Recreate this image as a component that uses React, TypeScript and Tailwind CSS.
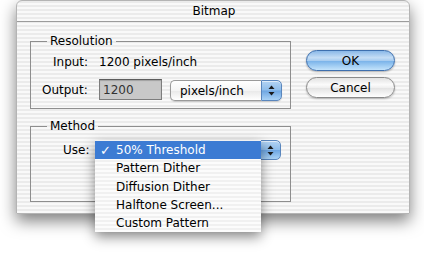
import React from "react";

const stripes =
  "bg-[repeating-linear-gradient(180deg,#ebebeb_0px,#ebebeb_2px,#f9f9f9_2px,#f9f9f9_4px)]";

function Arrows() {
  return (
    <svg width="7" height="11" viewBox="0 0 7 11">
      <path d="M3.5 0.5 L6.5 4 L0.5 4 Z" fill="#1a1a1a" />
      <path d="M3.5 10.5 L6.5 7 L0.5 7 Z" fill="#1a1a1a" />
    </svg>
  );
}

function ArrowPart({ h }: { h: string }) {
  return (
    <div
      className={`w-[21px] ${h} rounded-r-[5px] border border-[#5a86bd] bg-[linear-gradient(180deg,#b3d3f3_0%,#8fbdea_48%,#6ea6e2_52%,#a9d2f6_100%)] flex items-center justify-center shadow-[inset_0_1px_0_rgba(255,255,255,0.6)]`}
    >
      <Arrows />
    </div>
  );
}

export default function App() {
  return (
    <div
      className="relative w-[424px] h-[269px] bg-white overflow-hidden text-black"
      style={{ fontFamily: '"DejaVu Sans", "Noto Sans", sans-serif' }}
    >
      <div
        className={`ml-[16px] w-[394px] h-[214px] rounded-t-[6px] border border-[#b4b4b4] ${stripes} shadow-[0_7px_16px_rgba(0,0,0,0.5)] flex flex-col`}
      >
        <div className="h-[21px] border-b border-[#9c9c9c] flex items-center justify-center text-[12px] leading-none pl-[2px]">
          Bitmap
        </div>
        <div className="flex pl-[13px] pt-[11px]">
          {/* left column */}
          <div className="w-[261px] flex flex-col">
            <fieldset className="h-[76px] border border-[#8e8e8e] p-0 m-0 min-w-0">
              <legend className="ml-[16px] px-[3px] text-[12px] leading-[16px]">
                Resolution
              </legend>
              <div className="flex mt-[5px] pl-[22px] h-[16px] items-center text-[12px] leading-[16px]">
                <span className="w-[46px]">Input:</span>
                <span>1200 pixels/inch</span>
              </div>
              <div className="flex mt-[8px] pl-[11px] items-center text-[12px]">
                <span className="w-[57px]">Output:</span>
                <div className="w-[63px] h-[21px] border border-[#7d7d7d] border-t-[#5d5d5d] bg-[#c8c8c8] flex items-center pl-[3px] text-[#333] shadow-[inset_0_1px_1px_rgba(0,0,0,0.2)]">
                  1200
                </div>
                <div className="ml-[8px] mt-[2px] flex h-[21px] rounded-[5px] shadow-[0_1px_1px_rgba(0,0,0,0.15)]">
                  <div className="w-[91px] h-[21px] rounded-l-[5px] border border-r-0 border-[#9a9a9a] bg-[linear-gradient(180deg,#ffffff_0%,#f4f4f4_50%,#e9e9e9_52%,#ffffff_100%)] flex items-center pl-[9px]">
                    pixels/inch
                  </div>
                  <ArrowPart h="h-[21px]" />
                </div>
              </div>
            </fieldset>
            <fieldset className="mt-[9px] h-[84px] border border-[#8e8e8e] p-0 m-0 min-w-0">
              <legend className="ml-[16px] px-[3px] text-[12px] leading-[16px]">
                Method
              </legend>
              <div className="flex mt-[6px] pl-[32px] items-center text-[12px]">
                <span className="w-[32px]">Use:</span>
                <div className="relative flex h-[20px]">
                  <div className="w-[165px] h-[20px] rounded-l-[5px] border border-r-0 border-[#9a9a9a] bg-white" />
                  <ArrowPart h="h-[20px]" />
                  {/* open menu */}
                  <div
                    className={`absolute left-0 top-0 w-[166px] h-[92px] ${stripes} bg-[repeating-linear-gradient(180deg,#f1f1f1_0px,#f1f1f1_2px,#fcfcfc_2px,#fcfcfc_4px)] shadow-[0_5px_12px_rgba(0,0,0,0.45)] flex flex-col pt-[1px] text-[12px]`}
                  >
                    <div className="h-[18px] bg-[#3c7bd3] text-white flex items-center">
                      <span className="w-[21px] pl-[5px] text-[13px] leading-none">✓</span>
                      <span>50% Threshold</span>
                    </div>
                    <div className="h-[18px] flex items-center pl-[21px]">Pattern Dither</div>
                    <div className="h-[19px] flex items-center pl-[21px]">Diffusion Dither</div>
                    <div className="h-[18px] flex items-center pl-[21px]">Halftone Screen...</div>
                    <div className="h-[17px] flex items-center pl-[21px]">Custom Pattern</div>
                  </div>
                </div>
              </div>
            </fieldset>
          </div>
          {/* right column */}
          <div className="ml-[15px] mt-[17px] flex flex-col gap-[6px] text-[12px]">
            <div className="w-[89px] h-[21px] rounded-full border border-[#3d6fae] bg-[linear-gradient(180deg,#8ab8e8_0%,#c4ddf5_35%,#a9cdf0_50%,#7db5ea_55%,#c3e3fb_100%)] flex items-center justify-center shadow-[0_1px_2px_rgba(0,0,0,0.3)]">
              OK
            </div>
            <div className="w-[89px] h-[21px] rounded-full border border-[#8a8a8a] bg-[linear-gradient(180deg,#e2e2e2_0%,#fbfbfb_35%,#f0f0f0_50%,#e4e4e4_55%,#ffffff_100%)] flex items-center justify-center shadow-[0_1px_2px_rgba(0,0,0,0.25)]">
              Cancel
            </div>
          </div>
        </div>
      </div>
    </div>
  );
}
